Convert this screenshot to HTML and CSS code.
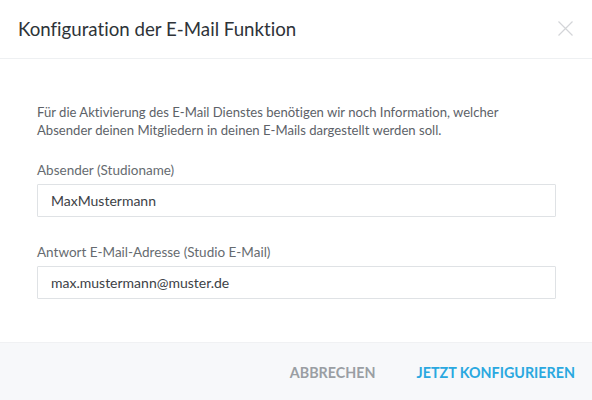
FILE: index.html
```html
<!DOCTYPE html>
<html lang="de">
<head>
  <meta charset="UTF-8">
  <meta name="viewport" content="width=device-width, initial-scale=1.0">
  <title>E-Mail Funktion</title>
  <link rel="stylesheet" href="styles.css">
</head>
<body>
  <div class="modal">
    <div class="modal-header">
      <h2>Konfiguration der E-Mail Funktion</h2>
      <button class="close" aria-label="Schließen">
        <svg width="15" height="15" viewBox="0 0 15 15">
          <path d="M0.5 0.5 L14.5 14.5 M14.5 0.5 L0.5 14.5" stroke="#d3d5d8" stroke-width="1.2" fill="none"/>
        </svg>
      </button>
    </div>

    <div class="modal-body">
      <p class="intro">Für die Aktivierung des E-Mail Dienstes benötigen wir noch Information, welcher Absender deinen Mitgliedern in deinen E-Mails dargestellt werden soll.</p>

      <div class="form-group">
        <label for="sender">Absender (Studioname)</label>
        <input type="text" id="sender" value="MaxMustermann">
      </div>

      <div class="form-group">
        <label for="replyTo">Antwort E-Mail-Adresse (Studio E-Mail)</label>
        <input type="email" id="replyTo" value="max.mustermann@muster.de">
      </div>
    </div>

    <div class="modal-footer">
      <button class="btn btn-cancel">Abbrechen</button>
      <button class="btn btn-primary">Jetzt konfigurieren</button>
    </div>
  </div>
</body>
</html>
```

FILE: styles.css
```css
/* General Reset */
* {
  margin: 0;
  padding: 0;
  box-sizing: border-box;
}

body {
  font-family: 'Lato', 'Open Sans', sans-serif;
  font-variant-ligatures: none;
  background: #fff;
  width: 592px;
  height: 400px;
  overflow: hidden;
}

.modal {
  display: flex;
  flex-direction: column;
  height: 400px;
}

.modal-header {
  height: 59px;
  padding: 0 18px;
  display: flex;
  align-items: center;
  justify-content: space-between;
  border-bottom: 1px solid #eef0f2;
}

.modal-header h2 {
  font-size: 18.7px;
  font-weight: 400;
  color: #2e3338;
}

.close {
  border: none;
  background: none;
  width: 15px;
  height: 15px;
  margin-right: 1px;
  margin-top: -2px;
  cursor: pointer;
}

.close svg {
  display: block;
}

.modal-body {
  flex: 1;
  padding: 44px 36px 0 37px;
}

.intro {
  max-width: 490px;
  font-size: 13.1px;
  line-height: 18px;
  color: #5d6268;
  margin-bottom: 22px;
}

.form-group {
  display: flex;
  flex-direction: column;
  margin-bottom: 26px;
}

.form-group label {
  font-size: 13.5px;
  line-height: 18px;
  color: #666b70;
  margin-bottom: 5px;
}

.form-group input {
  height: 33px;
  padding: 0 13px;
  border: 1px solid #dfe2e5;
  border-radius: 1px;
  font-family: inherit;
  font-size: 14px;
  color: #3c4146;
  outline: none;
  background: #fff;
}

.modal-footer {
  height: 58px;
  background: #f7f8fa;
  border-top: 1px solid #f0f1f3;
  display: flex;
  align-items: center;
  justify-content: flex-end;
  gap: 41px;
  padding: 2px 17px 0 0;
}

.btn {
  border: none;
  background: none;
  font-family: inherit;
  font-size: 14.3px;
  font-weight: 700;
  text-transform: uppercase;
  cursor: pointer;
}

.btn-cancel {
  color: #9a9ea3;
}

.btn-primary {
  color: #2aa8e0;
}
```
